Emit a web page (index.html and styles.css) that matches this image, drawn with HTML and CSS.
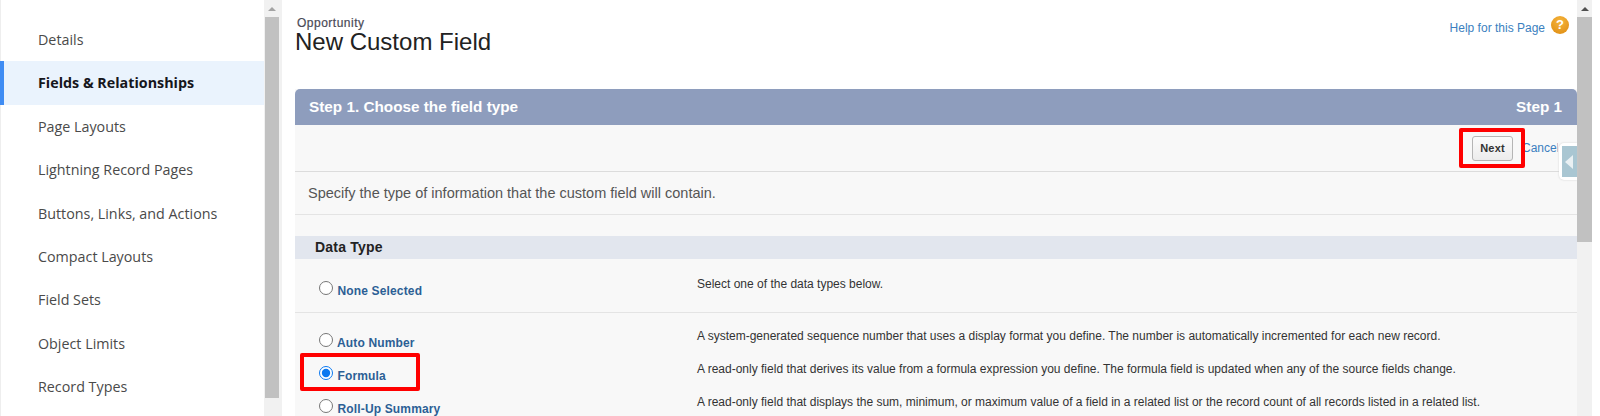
FILE: index.html
```html
<!DOCTYPE html>
<html lang="en">
<head>
  <meta charset="UTF-8" />
  <title>New Custom Field</title>
  <link rel="stylesheet" href="styles.css">
</head>
<body>
  <div class="app">
    <!-- object manager nav -->
    <nav class="sidenav">
      <a class="nav-item">Details</a>
      <a class="nav-item active">Fields &amp; Relationships</a>
      <a class="nav-item">Page Layouts</a>
      <a class="nav-item">Lightning Record Pages</a>
      <a class="nav-item">Buttons, Links, and Actions</a>
      <a class="nav-item">Compact Layouts</a>
      <a class="nav-item">Field Sets</a>
      <a class="nav-item">Object Limits</a>
      <a class="nav-item">Record Types</a>
    </nav>
    <div class="scrollbar side-scroll">
      <span class="arrow"></span>
      <span class="thumb"></span>
    </div>

    <main class="content">
      <header class="page-head">
        <div>
          <div class="object-name">Opportunity</div>
          <h1>New Custom Field</h1>
        </div>
        <a class="help">Help for this Page <span class="help-icon">?</span></a>
      </header>

      <section class="step">
        <div class="step-title">
          <span>Step 1. Choose the field type</span>
          <span>Step 1</span>
        </div>
        <div class="toolbar">
          <button class="btn" type="button">Next</button>
          <a class="cancel">Cancel</a>
          <span class="mark mark-next"></span>
        </div>
        <p class="intro">Specify the type of information that the custom field will contain.</p>

        <h3 class="band">Data Type</h3>

        <div class="type-row first">
          <label class="type-name"><input type="radio" name="type"> None Selected</label>
          <div class="type-desc">Select one of the data types below.</div>
        </div>

        <div class="type-group">
          <div class="type-row">
            <label class="type-name"><input type="radio" name="type"> Auto Number</label>
            <div class="type-desc">A system-generated sequence number that uses a display format you define. The number is automatically incremented for each new record.</div>
          </div>
          <div class="type-row">
            <label class="type-name"><input type="radio" name="type" checked> Formula</label>
            <div class="type-desc">A read-only field that derives its value from a formula expression you define. The formula field is updated when any of the source fields change.</div>
            <span class="mark mark-formula"></span>
          </div>
          <div class="type-row">
            <label class="type-name"><input type="radio" name="type"> Roll-Up Summary</label>
            <div class="type-desc">A read-only field that displays the sum, minimum, or maximum value of a field in a related list or the record count of all records listed in a related list.</div>
          </div>
        </div>
      </section>

      <div class="side-tab"><span class="tab-arrow"></span></div>
    </main>

    <div class="scrollbar page-scroll">
      <span class="arrow"></span>
      <span class="thumb"></span>
    </div>
  </div>
</body>
</html>
```

FILE: styles.css
```css
html, body {
  margin: 0;
  height: 416px;
  overflow: hidden;
  background: white;
}
.app {
  display: flex;
  height: 416px;
  font-family: 'Liberation Sans', Arial, sans-serif;
  color: #333;
}

/* left nav */
.sidenav {
  width: 264px;
  padding-top: 18px;
  box-sizing: border-box;
  border-left: 1px solid #eee;
  flex-shrink: 0;
}
.nav-item {
  display: block;
  height: 43.4px;
  line-height: 43.4px;
  padding-left: 37px;
  font-family: 'Open Sans', sans-serif;
  font-size: 14.3px;
  color: #4a4a4a;
  white-space: nowrap;
}
.nav-item.active {
  margin-left: -1px;
  padding-left: 34px;
  border-left: 4px solid #3f8cf3;
  background: #eaf3fd;
  color: #16161c;
  font-weight: 700;
}

/* scrollbars */
.scrollbar {
  flex-shrink: 0;
  background: #f1f1f1;
  display: flex;
  flex-direction: column;
  align-items: center;
}
.side-scroll {
  width: 18px;
  padding: 0 3px 0 1px;
  box-sizing: border-box;
}
.page-scroll {
  width: 23px;
  padding-right: 8px;
  box-sizing: border-box;
  background: linear-gradient(to right, #f1f1f1 15px, white 15px);
}
.arrow {
  width: 0;
  height: 0;
  margin: 7px 0 6px;
  border: 4px solid transparent;
  border-top: 0;
  border-bottom: 4px solid #a3a3a3;
}
.page-scroll .arrow {
  border-bottom-color: #505050;
}
.thumb {
  width: 100%;
  height: 381px;
  background: #c1c1c1;
}
.page-scroll .thumb {
  height: 225px;
}

/* main panel */
.content {
  position: relative;
  flex: 1;
  min-width: 0;
  padding-left: 13px;
  background: white;
}
.page-head {
  display: flex;
  justify-content: space-between;
  height: 89px;
  box-sizing: border-box;
  padding-top: 16px;
}
.object-name {
  margin: 1px 0 0 2px;
  font-size: 12px;
  line-height: 13px;
  letter-spacing: 0.5px;
  color: #4a4a56;
  -webkit-text-stroke: 0.2px #4a4a56;
}
h1 {
  margin: -2px 0 0;
  font-size: 24px;
  line-height: 28px;
  font-weight: 400;
  color: #222;
}
.help {
  display: flex;
  align-items: flex-start;
  gap: 6px;
  height: 24px;
  margin-right: 8px;
  font-size: 12px;
  line-height: 24px;
  color: #3b7fc0;
}
.help-icon {
  width: 18px;
  height: 18px;
  border-radius: 50%;
  background: radial-gradient(circle at 50% 30%, #f6b53c, #dd8a10);
  color: white;
  font-size: 13px;
  font-weight: 700;
  line-height: 18px;
  text-align: center;
}

.step {
  background: #f8f8f8;
  height: 327px;
}
.step-title {
  display: flex;
  justify-content: space-between;
  height: 36px;
  padding: 0 15px 0 14px;
  background: #8e9dbd;
  border-radius: 5px 5px 0 0;
  color: white;
  font-size: 15.3px;
  font-weight: 700;
  line-height: 36px;
}
.toolbar {
  position: relative;
  display: flex;
  align-items: center;
  justify-content: flex-end;
  gap: 9px;
  height: 47px;
  border-bottom: 1px solid #dcdcdc;
  box-sizing: border-box;
  padding-right: 19px;
}
.btn {
  width: 41px;
  height: 25px;
  padding: 0;
  border: 1px solid #b5b5b5;
  border-radius: 3px;
  background: linear-gradient(#fbfbfb, #ececec);
  font-family: inherit;
  font-size: 11px;
  font-weight: 700;
  letter-spacing: 0.2px;
  color: #333;
}
.cancel {
  width: 36px;
  overflow: hidden;
  font-size: 12px;
  color: #3b7fc0;
}
.intro {
  margin: 0 0 21px;
  height: 43px;
  box-sizing: border-box;
  padding-left: 13px;
  border-bottom: 1px solid #e4e4e4;
  font-size: 14.5px;
  line-height: 43px;
  color: #555;
}
.band {
  margin: 0;
  height: 23px;
  padding-left: 20px;
  background: #e2e6ee;
  font-size: 14px;
  letter-spacing: 0.2px;
  line-height: 23px;
  color: #222;
}
.type-row {
  position: relative;
  display: flex;
  height: 33px;
}
.type-row.first {
  height: 54px;
  padding-top: 16px;
  box-sizing: border-box;
  border-bottom: 1px solid #e4e4e4;
}
.type-group {
  padding-top: 14px;
}
.type-name {
  display: block;
  width: 402px;
  padding: 6px 0 0 24px;
  box-sizing: border-box;
  font-size: 12px;
  font-weight: 700;
  color: #2c5f95;
  white-space: nowrap;
  letter-spacing: 0.15px;
}
.type-name input {
  width: 14px;
  height: 14px;
  margin: 0 1px 0 0;
  accent-color: #0a78f0;
}
.type-desc {
  font-size: 12px;
  line-height: 18px;
  color: #333;
  white-space: nowrap;
}

/* red highlight boxes from the screenshot */
.mark {
  position: absolute;
  box-sizing: border-box;
  border: 4px solid #f00;
  border-radius: 2px;
}
.mark-next {
  top: 3px;
  right: 52px;
  width: 66px;
  height: 40px;
}
.mark-formula {
  top: -7px;
  left: 5px;
  width: 120px;
  height: 38px;
}
.side-tab {
  position: absolute;
  top: 143px;
  right: 0;
  width: 18px;
  height: 37px;
  padding: 3px 0 3px 3px;
  box-sizing: border-box;
  background: white;
  border-radius: 5px 0 0 5px;
  box-shadow: 0 0 2px #ccc;
}
.tab-arrow {
  display: flex;
  align-items: center;
  height: 100%;
  background: #a9c6d2;
  padding-left: 3px;
  box-sizing: border-box;
}
.tab-arrow::before {
  content: '';
  border: 7px solid transparent;
  border-left: 0;
  border-right: 8px solid #e9f0f3;
}
```
